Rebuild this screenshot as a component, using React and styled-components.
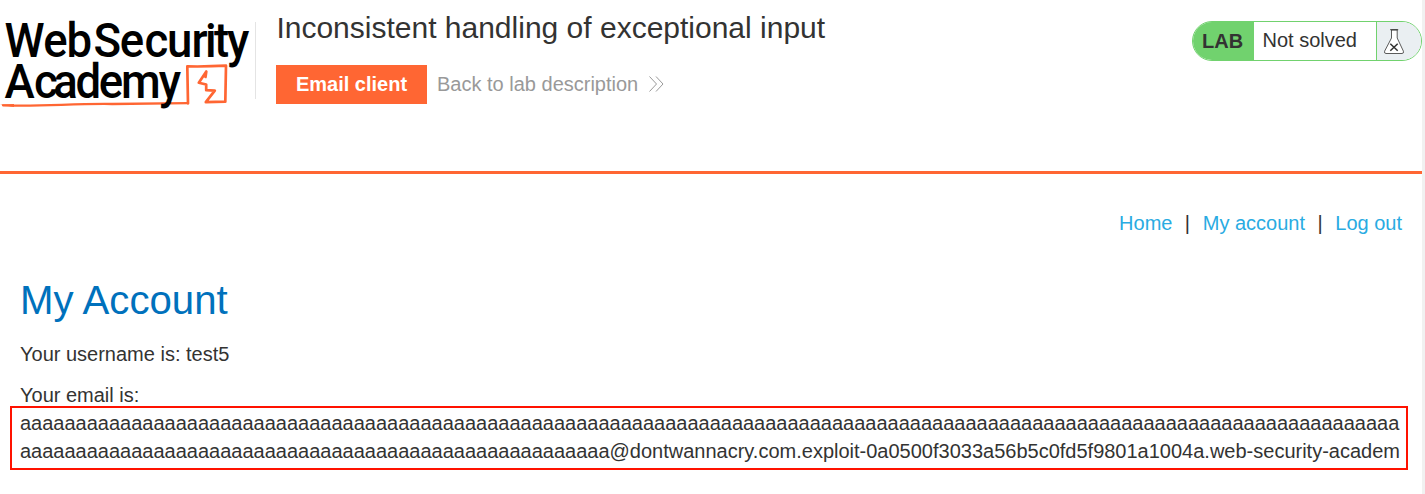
import React from "react";
import styled, { createGlobalStyle } from "styled-components";

const GlobalStyle = createGlobalStyle`
  * { box-sizing: border-box; }
  body {
    margin: 0;
    background: #f1f1f1;
    color: #333332;
    font: 20px/28px "Liberation Sans", Arial, sans-serif;
    overflow: hidden;
  }
`;

const Page = styled.div`
  width: calc(100% - 3px);
  height: 494px;
  background: #fff;
`;

const Header = styled.header`
  display: flex;
  align-items: flex-start;
  height: 174px;
  border-bottom: 3px solid #ff6633;
`;

const LogoLink = styled.div`
  flex: none;
  width: 256px;
  height: 77px;
  margin-top: 22px;
  border-right: 1px solid #e4e4e4;
`;

const LogoSvg = styled.svg`
  display: block;
  overflow: visible;
  font-family: Roboto, sans-serif;
  font-weight: 500;
  font-size: 48px;
`;

const TitleArea = styled.div`
  flex: 1;
  padding: 7px 0 0 20.4px;
`;

const Title = styled.h2`
  margin: 0;
  font-size: 30px;
  line-height: 42px;
  font-weight: 400;
`;

const Actions = styled.div`
  display: flex;
  align-items: flex-start;
  gap: 10px;
  margin: 16px 0 0 -0.4px;
`;

const EmailButton = styled.a`
  width: 151px;
  height: 39px;
  line-height: 39px;
  text-align: center;
  font-weight: 700;
  color: #fff;
  background: #ff6633;
`;

const BackLink = styled.a`
  display: flex;
  align-items: center;
  gap: 11px;
  padding-top: 5px;
  color: #999;
`;

const LabStatus = styled.div`
  display: flex;
  flex: none;
  width: 230px;
  height: 40px;
  margin-top: 21px;
  line-height: 38px;
  border: 1px solid #71d26e;
  border-radius: 20px;
  overflow: hidden;
`;

const LabTag = styled.span`
  width: 61px;
  padding-left: 9px;
  font-weight: 700;
  background: #71d26e;
`;

const LabState = styled.span`
  flex: 1;
  padding-left: 8.5px;
  line-height: 37px;
`;

const LabFlask = styled.span`
  width: 45px;
  padding: 7px 0 0 7px;
  line-height: 0;
  background: #eaeff2;
  border-left: 1px solid #71d26e;
`;

const Nav = styled.nav`
  display: flex;
  justify-content: flex-end;
  padding: 35px 20px 0;
`;

const NavLink = styled.a`
  color: #29abe2;
`;

const Divider = styled.span`
  margin: 0 12.7px 0 12.4px;
`;

const Main = styled.main`
  padding: 36px 20px 0;
`;

const Heading = styled.h1`
  margin: 0;
  font-size: 40.2px;
  line-height: 56px;
  font-weight: 400;
  color: #0071bc;
`;

const Line = styled.p`
  margin: ${({ $gap = 11 }) => $gap}px 0 0;
`;

const EmailBox = styled.div`
  width: 1398px;
  height: 64px;
  margin: -3px 0 0 -10px;
  padding: 1px 4px 0 8px;
  border: 2px solid #ff1200;
  white-space: nowrap;
`;

const EmailLine = styled.div`
  height: 28px;
`;

function Logo() {
  return (
    <LogoSvg width="255" height="90" viewBox="0 22 255 90">
      <g fill="none" stroke="#ff6633" strokeLinecap="round" strokeLinejoin="round">
        <path d="M3 105.300C45 106.500 70 103.500 112 104L188 103.200" strokeWidth="2.300" />
        <path d="M188 103.300L187.300 66.400Q206 66.800 226 65.700L225.300 101.700L205.800 102.200L214.800 90.600L206.200 90.200V84.500L198.800 82.800L206.300 71.500L205.500 77" strokeWidth="2.700" />
      </g>
      <path d="M0 104.500L14 104V107Z" fill="#ff6633" />
      <g transform="scale(.95 1)">
        <text x="4.700 45.500 70" y="57">Web</text>
        <text x="98.400 126.100 152.100 175.800 201.600 215.800 225.300 239" y="57">Security</text>
        <text x="4.700 35.800 56.100 79.500 104 127.400 167.100" y="98">Academy</text>
      </g>
    </LogoSvg>
  );
}

function Chevrons() {
  return (
    <svg width="15" height="16" viewBox="0 0 15 16" fill="none" stroke="#999" strokeWidth="1">
      <path d="M.5 .5L7.500 8L.5 15.500M7 .5L14 8L7 15.500" />
    </svg>
  );
}

function Flask() {
  return (
    <svg width="20" height="26" viewBox="0 0 20 26" fill="none" stroke="#333332">
      <path d="M7.500 1V9L.6 22.200Q0 24.500 2 24.500H18Q20 24.500 19.400 22.200L13.200 9V1Z" fill="#fff" strokeWidth=".8" />
      <path d="M6.200 .7H14.200" strokeWidth="1" />
      <path d="M6.300 14.700L13.700 21.800M13.700 14.700L6.300 21.800" strokeWidth="1.500" />
    </svg>
  );
}

export default function App() {
  return (
    <>
      <GlobalStyle />
      <Page>
        <Header>
          <LogoLink><Logo /></LogoLink>
          <TitleArea>
            <Title>Inconsistent handling of exceptional input</Title>
            <Actions>
              <EmailButton>Email client</EmailButton>
              <BackLink>Back to lab description <Chevrons /></BackLink>
            </Actions>
          </TitleArea>
          <LabStatus>
            <LabTag>LAB</LabTag>
            <LabState>Not solved</LabState>
            <LabFlask><Flask /></LabFlask>
          </LabStatus>
        </Header>
        <Nav>
          <NavLink>Home</NavLink>
          <Divider>|</Divider>
          <NavLink>My account</NavLink>
          <Divider>|</Divider>
          <NavLink>Log out</NavLink>
        </Nav>
        <Main>
          <Heading>My Account</Heading>
          <Line>Your username is: test5</Line>
          <Line $gap={13}>Your email is:</Line>
          <EmailBox>
            <EmailLine>{"a".repeat(124)}</EmailLine>
            <EmailLine>{"a".repeat(53)}@dontwannacry.com.exploit-0a0500f3033a56b5c0fd5f9801a1004a.web-security-academ</EmailLine>
          </EmailBox>
        </Main>
      </Page>
    </>
  );
}
